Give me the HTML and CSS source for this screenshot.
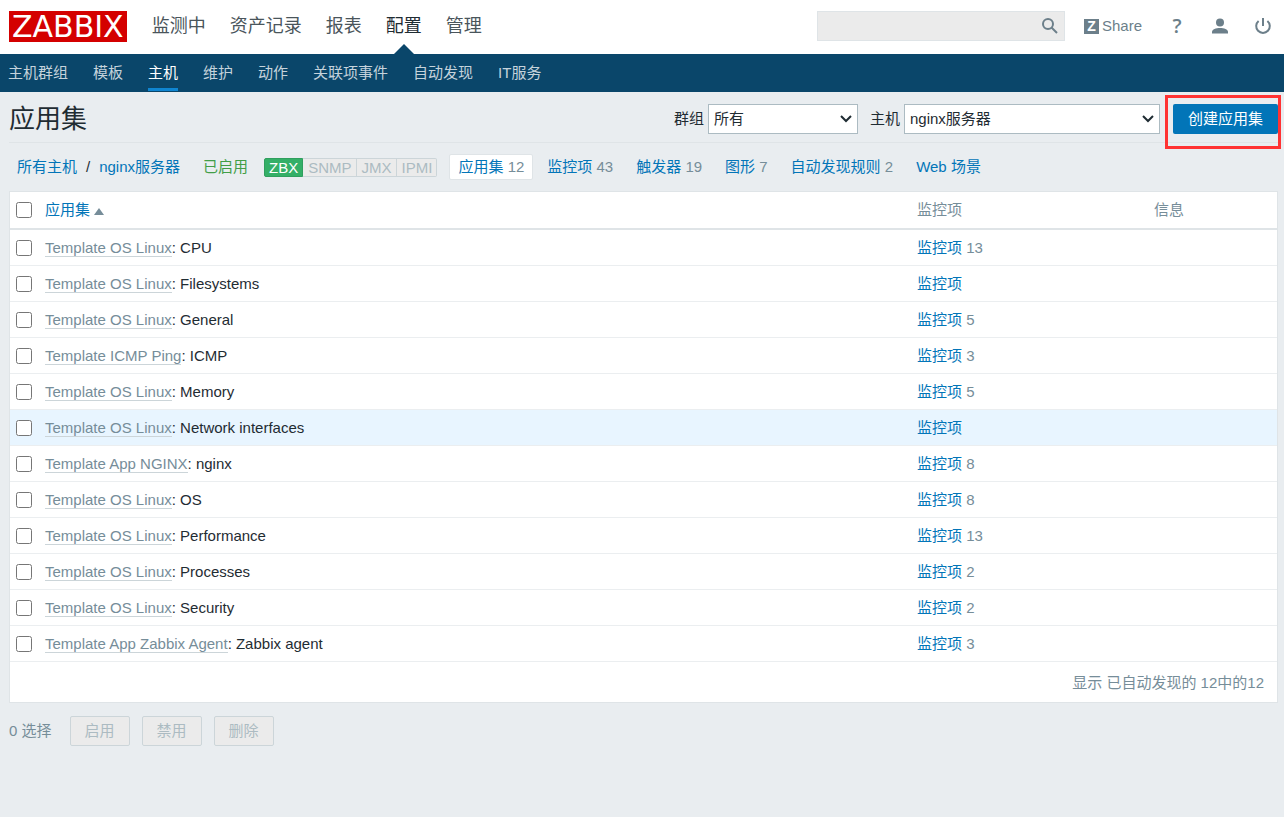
FILE: index.html
```html
<!DOCTYPE html>
<html lang="zh-CN">
<head>
    <meta charset="utf-8">
    <title>应用集</title>
    <link rel="stylesheet" href="styles.css">
</head>
<body>
    <header class="top-bar">
        <a class="logo" href="#">ZABBIX</a>
        <nav class="main-menu">
            <a href="#">监测中</a>
            <a href="#">资产记录</a>
            <a href="#">报表</a>
            <a href="#" class="selected">配置</a>
            <a href="#">管理</a>
        </nav>
        <form class="search">
            <input type="text" name="search" aria-label="搜索">
            <button type="submit" aria-label="搜索">
                <svg width="16" height="16" viewBox="0 0 16 16" fill="none" stroke="#6c7f8a" stroke-width="2">
                    <circle cx="6" cy="6" r="5"/>
                    <path d="M9.500 9.500L15 15"/>
                </svg>
            </button>
        </form>
        <div class="user-menu">
            <a href="#" class="share"><span class="share-icon">Z</span>Share</a>
            <a href="#" class="help">?</a>
            <a href="#" aria-label="用户">
                <svg width="16" height="16" viewBox="0 0 16 16" fill="#6c7f8a">
                    <circle cx="8" cy="4.500" r="4"/>
                    <path d="M0 15.500v-1.500c0-2.600 4-4 8-4s8 1.400 8 4v1.500z"/>
                </svg>
            </a>
            <a href="#" aria-label="退出">
                <svg width="16" height="16" viewBox="0 0 16 16" fill="none" stroke="#6c7f8a" stroke-width="2">
                    <path d="M3.600 2.900A6.800 6.800 0 1 0 12.400 2.900M8 0v8"/>
                </svg>
            </a>
        </div>
    </header>

    <nav class="sub-menu">
        <a href="#">主机群组</a>
        <a href="#">模板</a>
        <a href="#" class="selected">主机</a>
        <a href="#">维护</a>
        <a href="#">动作</a>
        <a href="#">关联项事件</a>
        <a href="#">自动发现</a>
        <a href="#">IT服务</a>
    </nav>

    <main>
        <div class="page-header">
            <h1>应用集</h1>
            <form class="filter">
                <label for="group">群组</label>
                <select id="group" class="group-select">
                    <option>所有</option>
                </select>
                <label for="host">主机</label>
                <select id="host" class="host-select">
                    <option>nginx服务器</option>
                </select>
                <div class="create">
                    <button type="button">创建应用集</button>
                </div>
            </form>
        </div>

        <div class="host-nav">
            <div class="path"><a href="#">所有主机</a><span>/</span><a href="#">nginx服务器</a></div>
            <span class="enabled">已启用</span>
            <div class="badges">
                <span class="on">ZBX</span><span>SNMP</span><span>JMX</span><span>IPMI</span>
            </div>
            <div class="tabs">
                <div class="tab active"><a href="#">应用集</a> 12</div>
                <div class="tab"><a href="#">监控项</a> 43</div>
                <div class="tab"><a href="#">触发器</a> 19</div>
                <div class="tab"><a href="#">图形</a> 7</div>
                <div class="tab"><a href="#">自动发现规则</a> 2</div>
                <div class="tab"><a href="#">Web 场景</a></div>
            </div>
        </div>

        <table class="list">
            <thead>
                <tr>
                    <th class="col-check"><input type="checkbox" aria-label="全选"></th>
                    <th><a href="#">应用集<span class="sort-up"></span></a></th>
                    <th class="col-items">监控项</th>
                    <th class="col-info">信息</th>
                </tr>
            </thead>
            <tbody>
                <tr>
                    <td><input type="checkbox" aria-label="CPU"></td>
                    <td><a href="#" class="template">Template OS Linux</a>: CPU</td>
                    <td class="items"><a href="#">监控项</a> 13</td>
                    <td></td>
                </tr>
                <tr>
                    <td><input type="checkbox" aria-label="Filesystems"></td>
                    <td><a href="#" class="template">Template OS Linux</a>: Filesystems</td>
                    <td class="items"><a href="#">监控项</a></td>
                    <td></td>
                </tr>
                <tr>
                    <td><input type="checkbox" aria-label="General"></td>
                    <td><a href="#" class="template">Template OS Linux</a>: General</td>
                    <td class="items"><a href="#">监控项</a> 5</td>
                    <td></td>
                </tr>
                <tr>
                    <td><input type="checkbox" aria-label="ICMP"></td>
                    <td><a href="#" class="template">Template ICMP Ping</a>: ICMP</td>
                    <td class="items"><a href="#">监控项</a> 3</td>
                    <td></td>
                </tr>
                <tr>
                    <td><input type="checkbox" aria-label="Memory"></td>
                    <td><a href="#" class="template">Template OS Linux</a>: Memory</td>
                    <td class="items"><a href="#">监控项</a> 5</td>
                    <td></td>
                </tr>
                <tr class="hover">
                    <td><input type="checkbox" aria-label="Network interfaces"></td>
                    <td><a href="#" class="template">Template OS Linux</a>: Network interfaces</td>
                    <td class="items"><a href="#">监控项</a></td>
                    <td></td>
                </tr>
                <tr>
                    <td><input type="checkbox" aria-label="nginx"></td>
                    <td><a href="#" class="template">Template App NGINX</a>: nginx</td>
                    <td class="items"><a href="#">监控项</a> 8</td>
                    <td></td>
                </tr>
                <tr>
                    <td><input type="checkbox" aria-label="OS"></td>
                    <td><a href="#" class="template">Template OS Linux</a>: OS</td>
                    <td class="items"><a href="#">监控项</a> 8</td>
                    <td></td>
                </tr>
                <tr>
                    <td><input type="checkbox" aria-label="Performance"></td>
                    <td><a href="#" class="template">Template OS Linux</a>: Performance</td>
                    <td class="items"><a href="#">监控项</a> 13</td>
                    <td></td>
                </tr>
                <tr>
                    <td><input type="checkbox" aria-label="Processes"></td>
                    <td><a href="#" class="template">Template OS Linux</a>: Processes</td>
                    <td class="items"><a href="#">监控项</a> 2</td>
                    <td></td>
                </tr>
                <tr>
                    <td><input type="checkbox" aria-label="Security"></td>
                    <td><a href="#" class="template">Template OS Linux</a>: Security</td>
                    <td class="items"><a href="#">监控项</a> 2</td>
                    <td></td>
                </tr>
                <tr>
                    <td><input type="checkbox" aria-label="Zabbix agent"></td>
                    <td><a href="#" class="template">Template App Zabbix Agent</a>: Zabbix agent</td>
                    <td class="items"><a href="#">监控项</a> 3</td>
                    <td></td>
                </tr>
            </tbody>
        </table>
        <div class="table-footer">显示 已自动发现的 12中的12</div>

        <div class="actions">
            <span>0 选择</span>
            <button type="button" disabled>启用</button>
            <button type="button" disabled>禁用</button>
            <button type="button" disabled>删除</button>
        </div>
    </main>
</body>
</html>
```
FILE: styles.css
```css
* {
    box-sizing: border-box;
}

body {
    margin: 0;
    background: #e9edf0;
    color: #1f2c33;
    font-family: "Liberation Sans", Arial, "Noto Sans CJK SC", sans-serif;
    font-size: 15px;
    line-height: 20px;
}

a {
    color: #0275b8;
    text-decoration: none;
}

input,
select,
button {
    font: inherit;
}

/* top bar */
.top-bar {
    display: flex;
    align-items: center;
    height: 54px;
    padding: 0 13px 2px 9px;
    background: #fff;
}

.logo {
    height: 31px;
    padding: 0 3px;
    background: #d40000;
    color: #fff;
    font-family: "DejaVu Sans", sans-serif;
    font-size: 30px;
    line-height: 31px;
}

.main-menu {
    display: flex;
    gap: 24px;
    margin-left: 25px;
    font-size: 18px;
    line-height: 54px;
}

.main-menu a {
    color: #4a555b;
}

.main-menu .selected {
    position: relative;
    color: #1f2c33;
}

.main-menu .selected::after {
    content: "";
    position: absolute;
    left: 50%;
    bottom: -1px;
    margin-left: -10px;
    border: 10px solid transparent;
    border-top: 0;
    border-bottom-color: #0a466a;
}

.search {
    display: flex;
    width: 248px;
    height: 30px;
    margin-left: auto;
    background: #ebebeb;
    border: 1px solid #dfe4e7;
}

.search input {
    flex: 1;
    min-width: 0;
    padding: 0 5px;
    background: none;
    border: 0;
}

.search button {
    display: flex;
    align-items: center;
    padding: 0 6px;
    background: none;
    border: 0;
}

.user-menu {
    display: flex;
    align-items: center;
    gap: 27px;
    margin-left: 19px;
}

.user-menu a {
    display: flex;
    color: #6c7f8a;
}

.share {
    align-items: center;
    gap: 3px;
}

.share-icon {
    width: 15px;
    height: 15px;
    background: #6c7f8a;
    color: #fff;
    font-size: 14px;
    font-weight: bold;
    line-height: 15px;
    text-align: center;
}

.user-menu .help {
    justify-content: center;
    width: 16px;
    font-family: "Open Sans", sans-serif;
    font-size: 20px;
    font-weight: 600;
}

/* second level menu */
.sub-menu {
    display: flex;
    gap: 25px;
    height: 38px;
    padding: 0 8px;
    background: #0a466a;
    line-height: 38px;
}

.sub-menu a {
    height: 37px;
    color: #c5d3dc;
}

.sub-menu .selected {
    border-bottom: 3px solid #0f85d1;
    color: #fff;
}

main {
    padding: 0 6px 0 9px;
}

.page-header {
    display: flex;
    align-items: center;
    justify-content: space-between;
    height: 51px;
    padding-top: 4px;
    border-bottom: 1px solid #dfe4e7;
}

h1 {
    margin: 0;
    font-size: 26px;
    font-weight: normal;
    line-height: 36px;
}

.filter {
    display: flex;
    align-items: center;
}

.filter label {
    margin: 0 4px 0 12px;
}

.filter select {
    height: 30px;
    padding: 0 24px 0 5px;
    appearance: none;
    background: #fff url("data:image/svg+xml,%3Csvg xmlns='http://www.w3.org/2000/svg' width='12' height='8' fill='none' stroke='%231f2c33' stroke-width='2'%3E%3Cpath d='M1 1l5 5 5-5'/%3E%3C/svg%3E") no-repeat right 5px center;
    border: 1px solid #acbbc2;
    border-radius: 0;
    color: #1f2c33;
}

.group-select {
    width: 150px;
}

.host-select {
    width: 256px;
}

.create {
    position: relative;
    margin-left: 13px;
}

.create button {
    display: block;
    height: 30px;
    padding: 0 15px;
    background: #0275b8;
    border: 0;
    border-radius: 2px;
    color: #fff;
}

/* red frame around the create button */
.create::after {
    content: "";
    position: absolute;
    top: -9px;
    right: -3px;
    bottom: -15px;
    left: -8px;
    border: 3px solid #ff3333;
    pointer-events: none;
}

/* host navigation */
.host-nav {
    display: flex;
    align-items: center;
    height: 48px;
    padding: 0 8px;
}

.path span {
    margin: 0 9px;
}

.enabled {
    margin: 0 16px 0 23px;
    color: #429e47;
}

.badges {
    display: flex;
    line-height: 17px;
}

.badges span {
    padding: 0 4px 0 5px;
    background: #ebebeb;
    border: 1px solid #ccd5d9;
    border-left: 0;
    color: #acbbc2;
}

.badges .on {
    padding: 0 4px;
    background: #34af67;
    border: 1px solid #2f9f5e;
    border-radius: 2px 0 0 2px;
    color: #fff;
}

.badges span:last-child {
    border-radius: 0 2px 2px 0;
}

.tabs {
    display: flex;
    gap: 5px;
    margin-left: 12px;
}

.tab {
    padding: 0 8px;
    border: 1px solid transparent;
    color: #768d99;
    line-height: 24px;
}

.tab.active {
    background: #fff;
    border-color: #dfe4e7;
    border-radius: 2px;
}

/* list */
.list {
    width: 100%;
    background: #fff;
    border: 1px solid #dfe4e7;
    border-bottom: 0;
    border-spacing: 0;
    table-layout: fixed;
}

.list th,
.list td {
    height: 36px;
    padding: 0 5px;
    border-bottom: 1px solid #ebeef0;
    text-align: left;
}

.list th {
    height: 38px;
    border-bottom: 2px solid #dfe4e7;
    color: #768d99;
    font-weight: normal;
}

.list input {
    display: block;
    width: 16px;
    height: 16px;
    margin: 0 1px;
}

.col-check {
    width: 30px;
}

.col-items {
    width: 237px;
}

.col-info {
    width: 128px;
}

.sort-up {
    display: inline-block;
    margin-left: 4px;
    border: 5px solid transparent;
    border-top: 0;
    border-bottom: 7px solid #768d99;
}

.list .hover {
    background: #e8f5ff;
}

.template {
    border-bottom: 1px solid #ccd5d9;
    color: #768d99;
}

.items {
    color: #768d99;
}

.table-footer {
    padding: 11px 13px 9px;
    background: #fff;
    border: 1px solid #dfe4e7;
    border-top: 0;
    color: #768d99;
    text-align: right;
}

.actions {
    display: flex;
    align-items: center;
    gap: 12px;
    margin-top: 13px;
    color: #768d99;
}

.actions span {
    margin-right: 6px;
}

.actions button {
    width: 60px;
    height: 30px;
    padding: 0;
    background: #ebebeb;
    border: 1px solid #ccd5d9;
    border-radius: 2px;
    color: #acbbc2;
}
```
